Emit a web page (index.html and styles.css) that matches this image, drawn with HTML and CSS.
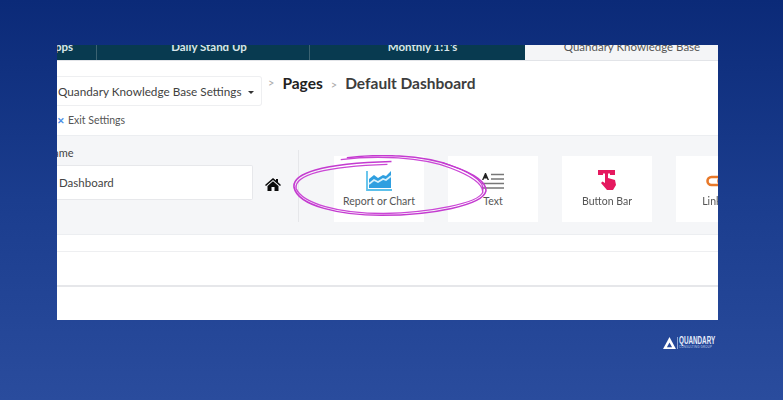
FILE: index.html
```html
<!DOCTYPE html>
<html lang="en">
<head>
<meta charset="utf-8">
<title>Quandary Knowledge Base Settings</title>
<link rel="stylesheet" href="styles.css">
</head>
<body>
<main class="shot">
  <div class="blurred">
    <nav class="tabs">
      <div class="tab tab-apps"><span class="apps-text">Apps</span></div>
      <div class="tab tab-standup">Daily Stand Up</div>
      <div class="tab tab-monthly">Monthly 1:1's</div>
      <div class="tab tab-active">Quandary Knowledge Base</div>
    </nav>
    <header class="head">
      <div class="head-row">
        <div class="dropdown"><span class="dropdown-label">Quandary Knowledge Base Settings</span><span class="caret"></span></div>
        <div class="crumbs">
          <span class="sep sep-first">&gt;</span>
          <span class="crumb crumb-pages">Pages</span>
          <span class="sep">&gt;</span>
          <span class="crumb crumb-current">Default Dashboard</span>
        </div>
      </div>
      <div class="exit"><span class="exit-x">✕</span><span>Exit Settings</span></div>
    </header>
    <section class="panel">
      <div class="name-col">
        <div class="name-label">Name</div>
        <div class="name-row">
          <div class="name-input"><span class="name-value">Dashboard</span></div>
          <svg class="home" viewBox="0 0 16 13" aria-hidden="true"><path d="M8 0 L11 2.6 V1 H13 V4.3 L16 7 L15 8 L8 2 L1 8 L0 7 Z M2.5 8 L8 3.2 L13.5 8 V13 H9.5 V9 H6.5 V13 H2.5 Z" fill="#0a0a0a"/></svg>
        </div>
      </div>
      <div class="divider"></div>
      <div class="cards">
        <div class="card">
          <svg class="icon" viewBox="0 0 26 20" aria-hidden="true">
            <path d="M1 0 V19 H26" fill="none" stroke="#5cc0ea" stroke-width="1.8"/>
            <path d="M3 8 L8 4 L12 7 L17 4 L20 5 L25 0 V17 H3 Z" fill="#2f9fe0"/>
            <path d="M3 13 L8 9 L12 11 L17 8 L20 9 L25 5" fill="none" stroke="#d8f1fb" stroke-width="1.7"/>
          </svg>
          <div class="card-label">Report or Chart</div>
        </div>
        <div class="card card-text">
          <svg class="icon icon-text" viewBox="0 0 22 18" aria-hidden="true">
            <path d="M0 7 L3 0 H4 L7 7 H5.5 L5 5.5 H2 L1.5 7 Z" fill="#222"/>
            <path d="M9 1.5 H22 M9 6 H22 M0 10.5 H22 M0 15 H22" stroke="#777" stroke-width="1.3"/>
          </svg>
          <div class="card-label">Text</div>
        </div>
        <div class="card">
          <svg class="icon icon-button" viewBox="0 0 20 22" aria-hidden="true">
            <path d="M1 0 H18 V5 H13 V3.5 H6 V5 H1 Z" fill="#e5195f"/>
            <path d="M8 3 H11 V8 L18 10 L19 15 L16 20 H10 L4 13 L5.5 11.5 L8 13 Z" fill="#e5195f"/>
          </svg>
          <div class="card-label">Button Bar</div>
        </div>
        <div class="card card-link">
          <svg class="icon icon-link" viewBox="0 0 30 12" aria-hidden="true">
            <rect x="1.5" y="2" width="16" height="8" rx="4" fill="none" stroke="#e8792a" stroke-width="2.6"/>
            <rect x="12.5" y="2" width="16" height="8" rx="4" fill="none" stroke="#e8792a" stroke-width="2.6"/>
          </svg>
          <div class="card-label">Link Bar</div>
        </div>
      </div>
    </section>
    <div class="row row-a"></div>
    <div class="row row-b"></div>
    <div class="row row-c"></div>
  </div>
  <svg class="scribble" viewBox="0 0 200 70" preserveAspectRatio="none" aria-hidden="true">
    <path d="M56 3 C85 -1 130 -1 160 12 C182 20 194 30 193 39 C190 54 140 65 90 65 C50 65 8 55 4 35 C2 20 30 9 100 7" fill="none" stroke="#c43bd0" stroke-width="1.6"/>
    <path d="M50 5 C85 0 130 2 158 14 C180 23 190 31 190 40 C186 52 138 62 92 63 C48 63 12 52 6 36 C4 22 34 12 96 10" fill="none" stroke="#cb47d6" stroke-width="1.4"/>
    <path d="M150 8 C176 17 192 28 190 38" fill="none" stroke="#c43bd0" stroke-width="1.2"/>
  </svg>
</main>
<footer class="brand">
  <svg class="brand-mark" viewBox="0 0 14 13" aria-hidden="true">
    <path d="M7 0 L14 13 H0 Z" fill="#fff"/>
    <path d="M7 6 L9.8 11 H4.2 Z" fill="#2a4b9c"/>
  </svg>
  <div class="brand-line"></div>
  <div class="brand-text">
    <div class="brand-name">QUANDARY</div>
    <div class="brand-sub">CONSULTING GROUP</div>
  </div>
</footer>
</body>
</html>
```
FILE: styles.css
```css
* { box-sizing: border-box; }
html, body { margin: 0; height: 400px; overflow: hidden; }
body {
  padding: 45px 65px 0 57px;
  background: linear-gradient(180deg, #0b2a78 0%, #1b3d8e 50%, #2a4c9d 100%);
  font-family: "Lato", "Liberation Sans", sans-serif;
  color: #444;
}
.shot {
  position: relative;
  width: 661px;
  height: 275px;
  overflow: hidden;
  background: #fff;
}
.blurred { filter: blur(0.6px); height: 100%; }

.tabs {
  display: flex;
  height: 16px;
  background: #083a50;
  color: #d9e6ec;
  font-size: 11.5px;
  font-weight: 700;
  line-height: 4px;
  overflow: hidden;
  border-bottom: 1px solid #e2e4e8;
}
.tab { flex: none; text-align: center; white-space: nowrap; }
.tab-apps { width: 40px; border-right: 1px solid #3b6272; text-align: left; }
.apps-text { margin-left: -10px; }
.tab-standup { width: 213px; border-right: 1px solid #3b6272; padding-left: 12px; }
.tab-monthly { width: 215px; padding-left: 10px; }
.tab-active {
  flex: 1;
  background: #f4f5f7;
  color: #555;
  font-weight: 400;
  padding-left: 21px;
  line-height: 3px;
  font-size: 11.5px;
}

.head { height: 75px; padding-top: 15px; background: #fff; border-bottom: 1px solid #eceef1; }
.head-row { display: flex; align-items: flex-start; }
.dropdown {
  display: flex;
  flex: none;
  align-items: center;
  width: 205px;
  height: 30px;
  padding-left: 1px;
  border: 1px solid #eeeff1;
  border-left: 0;
  border-radius: 0 3px 3px 0;
  font-size: 11.75px;
  color: #3f3f3f;
  white-space: nowrap;
}
.caret {
  margin-left: 6px;
  margin-top: 2px;
  border-left: 3px solid transparent;
  border-right: 3px solid transparent;
  border-top: 3px solid #333;
}
.crumbs { display: flex; align-items: baseline; margin-left: 6px; margin-top: -2px; }
.sep { font-size: 11px; color: #aaa; margin: 0 8px 0 8px; }
.sep-first { margin: 0 8px 0 0; position: relative; top: -2px; }
.crumb { font-size: 15.5px; font-weight: 700; white-space: nowrap; }
.crumb-pages { color: #222; }
.crumb-current { color: #3d3d3d; }

.exit { display: flex; align-items: center; margin-top: 8px; font-size: 10.5px; color: #555; }
.exit-x { width: 11px; color: #4f8fe6; font-size: 9px; font-weight: 700; }

.panel {
  display: flex;
  height: 99px;
  background: #f5f6f8;
  border-bottom: 1px solid #eceef1;
}
.name-col { flex: none; width: 241px; padding-top: 10px; overflow: hidden; }
.name-label { font-size: 11px; color: #444; margin-left: -12px; height: 19px; }
.name-row { display: flex; align-items: center; }
.name-input {
  display: flex;
  flex: none;
  align-items: center;
  width: 196px;
  height: 35px;
  padding-left: 2px;
  background: #fff;
  border: 1px solid #e7e8eb;
  border-left: 0;
  border-radius: 0 2px 2px 0;
  font-size: 11.5px;
  color: #444;
}
.home { flex: none; width: 16px; height: 13px; margin: 4px 0 0 12px; }
.divider { flex: none; width: 1px; height: 72px; margin-top: 14px; background: #e6e7ea; }
.cards { display: flex; gap: 24px; margin: 20px 0 0 35px; }
.card {
  display: flex;
  flex-direction: column;
  align-items: center;
  flex: none;
  width: 90px;
  height: 66px;
  background: #fff;
  padding-top: 15px;
}
.icon { display: block; width: 26px; height: 20px; }
.icon-text { width: 22px; height: 18px; margin: 2px 0 0 0; }
.icon-button { width: 20px; height: 22px; margin: -1px 0; }
.icon-link { width: 30px; height: 12px; margin: 4px 0; }
.card-label { margin-top: 4px; font-size: 10.5px; color: #555; white-space: nowrap; }

.row { background: #fff; }
.row-a { height: 17px; border-bottom: 1px solid #eeeff1; }
.row-b { height: 35px; border-bottom: 2px solid #e6e7ea; }
.row-c { height: 33px; }

.scribble {
  position: absolute;
  left: 233px;
  top: 110px;
  width: 203px;
  height: 65px;
  pointer-events: none;
}

.brand {
  display: flex;
  align-items: center;
  justify-content: flex-end;
  width: 660px;
  margin-top: 16px;
}
.brand-mark { width: 13px; height: 12px; }
.brand-line { width: 1px; height: 12px; margin: 0 1px; background: #8fa3d2; }
.brand-text { width: 38px; color: #e8eefb; }
.brand-name { font-size: 10px; font-weight: 700; line-height: 9px; white-space: nowrap; font-family: "Liberation Sans", sans-serif; transform: scaleX(0.63); transform-origin: left; }
.brand-sub { font-size: 3px; line-height: 4px; white-space: nowrap; letter-spacing: 0.06em; color: #b8c6e6; }
```
